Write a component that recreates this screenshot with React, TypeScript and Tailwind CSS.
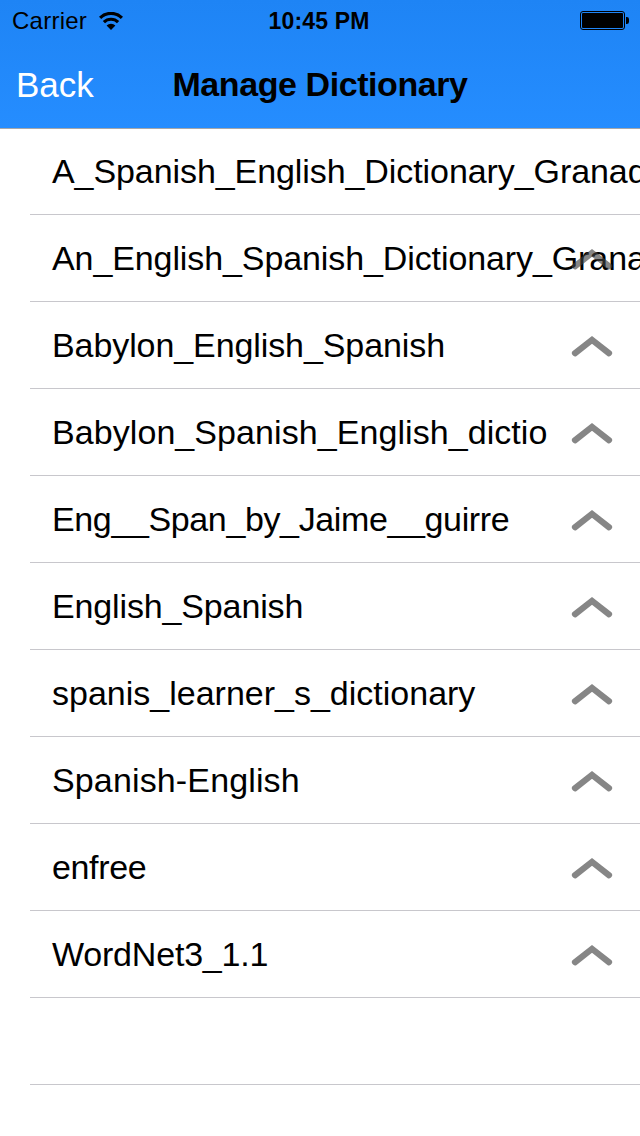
import clsx from "clsx";

type Dictionary = {
  name: string;
  spacing: string;
  movable: boolean;
};

const DICTIONARIES: Dictionary[] = [
  { name: "A_Spanish_English_Dictionary_Granada", spacing: "tracking-[-0.08px]", movable: false },
  { name: "An_English_Spanish_Dictionary_Granada", spacing: "tracking-[-0.1px]", movable: true },
  { name: "Babylon_English_Spanish", spacing: "tracking-[-0.09px]", movable: true },
  { name: "Babylon_Spanish_English_dictio", spacing: "tracking-[0.07px]", movable: true },
  { name: "Eng__Span_by_Jaime__guirre", spacing: "tracking-[-0.37px]", movable: true },
  { name: "English_Spanish", spacing: "tracking-[-0.14px]", movable: true },
  { name: "spanis_learner_s_dictionary", spacing: "tracking-normal", movable: true },
  { name: "Spanish-English", spacing: "tracking-[0.14px]", movable: true },
  { name: "enfree", spacing: "tracking-[-0.35px]", movable: true },
  { name: "WordNet3_1.1", spacing: "tracking-[-0.2px]", movable: true },
];

function WifiIcon() {
  return (
    <svg width="24" height="18" viewBox="0 0 24 18" fill="none" stroke="black" strokeWidth="3.2">
      <path d="M1.1 5.9a15.4 15.4 0 0 1 21.8 0" />
      <path d="M4.9 10.2a10 10 0 0 1 14.2 0" />
      <path d="M7.6 13.6a6.2 6.2 0 0 1 8.8 0L12 18Z" fill="black" stroke="none" />
    </svg>
  );
}

function BatteryIcon() {
  return (
    <svg width="50" height="19" viewBox="0 0 50 19">
      <rect x="0.5" y="0.5" width="44" height="18" rx="2.5" fill="none" stroke="black" />
      <rect x="2" y="2" width="41" height="15" rx="1" fill="black" />
      <path d="M46 6h.8a2.2 2.2 0 0 1 2.2 2.2v2.6a2.2 2.2 0 0 1-2.2 2.2H46Z" fill="black" />
    </svg>
  );
}

function MoveUpIcon() {
  return (
    <svg width="42" height="24" viewBox="0 0 42 24" fill="none">
      <path
        d="M4 19.2 21 5.9l17 13.3"
        stroke="#404040"
        strokeOpacity="0.63"
        strokeWidth="6.2"
        strokeLinecap="round"
      />
    </svg>
  );
}

function StatusBar() {
  return (
    <div className="grid h-[41px] grid-cols-3 items-center pl-3 pr-2.5 text-black">
      <div className="flex items-center gap-3">
        <span className="text-[24px] leading-[41px] tracking-[0.25px]">Carrier</span>
        <WifiIcon />
      </div>
      <div className="whitespace-nowrap pr-1 pt-0.5 text-center text-[23px] font-bold leading-[39px] tracking-[0.15px]">
        10:45 PM
      </div>
      <div className="flex justify-end">
        <BatteryIcon />
      </div>
    </div>
  );
}

export default function App() {
  return (
    <div
      className="flex h-[1136px] w-[640px] flex-col overflow-hidden bg-white text-black"
      style={{ fontFamily: '"Liberation Sans", Arial, sans-serif' }}
    >
      <header className="h-[129px] shrink-0 border-b border-[#a5a7aa] bg-linear-to-b from-[#1e84f5] to-[#258dff]">
        <StatusBar />
        <div className="grid h-[87px] grid-cols-[1fr_auto_1fr] items-center px-4">
          <button className="text-left text-[35px] leading-[87px] text-white">Back</button>
          <h1 className="text-[34px] font-bold leading-[87px] tracking-[-0.42px]">Manage Dictionary</h1>
        </div>
      </header>

      <ul className="-mt-px flex flex-col">
        {DICTIONARIES.map((dict) => (
          <li
            key={dict.name}
            className="relative ml-[30px] flex h-[87px] shrink-0 items-center overflow-hidden border-b border-[#c8c7cc] pl-[22px]"
          >
            <span className={clsx("whitespace-nowrap text-[34px] leading-[86px]", dict.spacing)}>{dict.name}</span>
            {/* the arrow floats over names that run past the edge */}
            {dict.movable && (
              <button className="absolute right-[27px] top-8">
                <MoveUpIcon />
              </button>
            )}
          </li>
        ))}
        <li className="ml-[30px] h-[87px] border-b border-[#c8c7cc]" />
      </ul>
    </div>
  );
}
